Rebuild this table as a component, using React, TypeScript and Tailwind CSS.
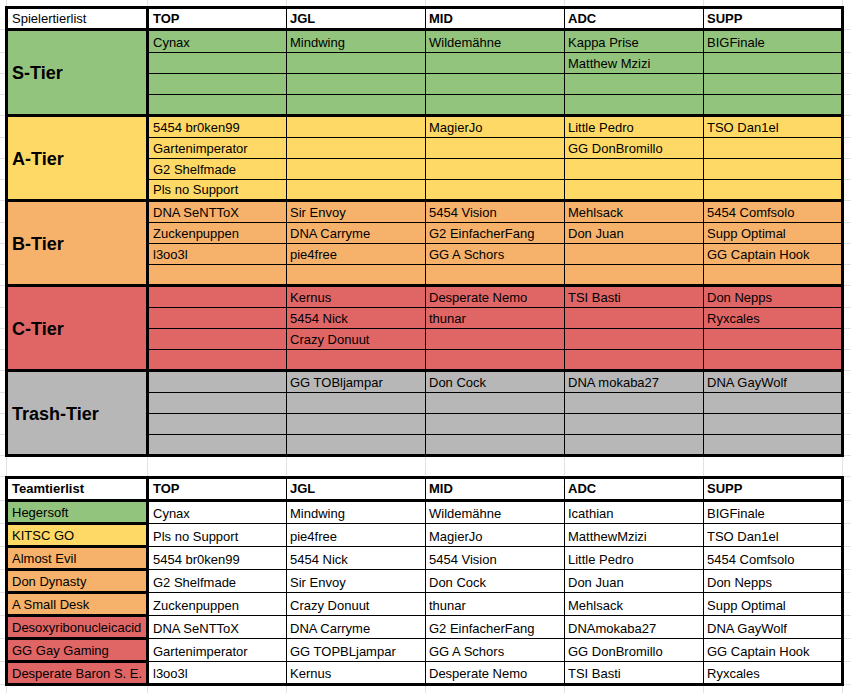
import React from "react";

const COLS = [
  "w-[138px] border-r border-black pl-[4px]",
  "w-[139px] border-r border-black pl-[3px]",
  "w-[139px] border-r border-black pl-[3px]",
  "w-[139px] border-r border-black pl-[3px]",
  "w-[137px] pl-[3px]",
];

const HEAD = ["TOP", "JGL", "MID", "ADC", "SUPP"];

type Tier = {
  name: string;
  bg: string;
  heights: string[];
  last?: boolean;
  rows: string[][];
};

const tiers: Tier[] = [
  {
    name: "S-Tier",
    bg: "bg-[#93c47d]",
    heights: ["h-[22px]", "h-[21px]", "h-[21px]", "h-[19px]"],
    rows: [
      ["Cynax", "Mindwing", "Wildemähne", "Kappa Prise", "BIGFinale"],
      ["", "", "", "Matthew Mzizi", ""],
      ["", "", "", "", ""],
      ["", "", "", "", ""],
    ],
  },
  {
    name: "A-Tier",
    bg: "bg-[#ffd966]",
    heights: ["h-[21px]", "h-[21px]", "h-[21px]", "h-[19px]"],
    rows: [
      ["5454 br0ken99", "", "MagierJo", "Little Pedro", "TSO Dan1el"],
      ["Gartenimperator", "", "", "GG DonBromillo", ""],
      ["G2 Shelfmade", "", "", "", ""],
      ["Pls no Support", "", "", "", ""],
    ],
  },
  {
    name: "B-Tier",
    bg: "bg-[#f6b26b]",
    heights: ["h-[21px]", "h-[21px]", "h-[21px]", "h-[19px]"],
    rows: [
      ["DNA SeNTToX", "Sir Envoy", "5454 Vision", "Mehlsack", "5454 Comfsolo"],
      ["Zuckenpuppen", "DNA Carryme", "G2 EinfacherFang", "Don Juan", "Supp Optimal"],
      ["l3oo3l", "pie4free", "GG A Schors", "", "GG Captain Hook"],
      ["", "", "", "", ""],
    ],
  },
  {
    name: "C-Tier",
    bg: "bg-[#e06666]",
    heights: ["h-[21px]", "h-[21px]", "h-[21px]", "h-[19px]"],
    rows: [
      ["", "Kernus", "Desperate Nemo", "TSI Basti", "Don Nepps"],
      ["", "5454 Nick", "thunar", "", "Ryxcales"],
      ["", "Crazy Donuut", "", "", ""],
      ["", "", "", "", ""],
    ],
  },
  {
    name: "Trash-Tier",
    bg: "bg-[#b7b7b7]",
    heights: ["h-[21px]", "h-[21px]", "h-[21px]", "h-[19px]"],
    last: true,
    rows: [
      ["", "GG TOBljampar", "Don Cock", "DNA mokaba27", "DNA GayWolf"],
      ["", "", "", "", ""],
      ["", "", "", "", ""],
      ["", "", "", "", ""],
    ],
  },
];

const teams: { name: string; bg: string; players: string[] }[] = [
  { name: "Hegersoft", bg: "bg-[#93c47d]", players: ["Cynax", "Mindwing", "Wildemähne", "Icathian", "BIGFinale"] },
  { name: "KITSC GO", bg: "bg-[#ffd966]", players: ["Pls no Support", "pie4free", "MagierJo", "MatthewMzizi", "TSO Dan1el"] },
  { name: "Almost Evil", bg: "bg-[#f6b26b]", players: ["5454 br0ken99", "5454 Nick", "5454 Vision", "Little Pedro", "5454 Comfsolo"] },
  { name: "Don Dynasty", bg: "bg-[#f6b26b]", players: ["G2 Shelfmade", "Sir Envoy", "Don Cock", "Don Juan", "Don Nepps"] },
  { name: "A Small Desk", bg: "bg-[#f6b26b]", players: ["Zuckenpuppen", "Crazy Donuut", "thunar", "Mehlsack", "Supp Optimal"] },
  { name: "Desoxyribonucleicacid", bg: "bg-[#e06666]", players: ["DNA SeNTToX", "DNA Carryme", "G2 EinfacherFang", "DNAmokaba27", "DNA GayWolf"] },
  { name: "GG Gay Gaming", bg: "bg-[#e06666]", players: ["Gartenimperator", "GG TOPBLjampar", "GG A Schors", "GG DonBromillo", "GG Captain Hook"] },
  { name: "Desperate Baron S. E.", bg: "bg-[#e06666]", players: ["l3oo3l", "Kernus", "Desperate Nemo", "TSI Basti", "Ryxcales"] },
];

const TEAM_ROW_H = ["h-[22px]", "h-[23px]", "h-[23px]", "h-[23px]", "h-[23px]", "h-[23px]", "h-[23px]", "h-[21px]"];

const GUTTER = [
  "h-[30px]", "h-[23px]", "h-[21px]", "h-[21px]", "h-[21px]",
  "h-[22px]", "h-[21px]", "h-[21px]", "h-[21px]",
  "h-[22px]", "h-[21px]", "h-[21px]", "h-[21px]",
  "h-[22px]", "h-[21px]", "h-[21px]", "h-[21px]",
  "h-[22px]", "h-[21px]", "h-[21px]", "h-[21px]",
  "h-[21px]", "h-[24px]", "h-[23px]", "h-[23px]", "h-[23px]", "h-[23px]",
  "h-[23px]", "h-[23px]", "h-[23px]", "h-[23px]",
];

function Gutter({ className }: { className: string }) {
  return (
    <div className={`flex flex-col ${className}`}>
      {GUTTER.map((h, i) => (
        <div key={i} className={`${h} border-b border-[#e2e2e2]`} />
      ))}
    </div>
  );
}

function GhostStrip({ h }: { h: string }) {
  return (
    <div className={`flex pl-[1px] ${h}`}>
      <div className="w-[142px] border-x border-[#e2e2e2]" />
      <div className="w-[139px] border-r border-[#e2e2e2]" />
      <div className="w-[139px] border-r border-[#e2e2e2]" />
      <div className="w-[139px] border-r border-[#e2e2e2]" />
      <div className="w-[139px] border-r border-[#e2e2e2]" />
      <div className="w-[139px] border-r border-[#e2e2e2]" />
    </div>
  );
}

function HeaderRow({ label, bold, h }: { label: string; bold: boolean; h: string }) {
  return (
    <div className={`flex ${h} border-b-[3px] border-black bg-white`}>
      <div className={`w-[141px] shrink-0 border-r-[3px] border-black pl-[4px] pt-[2px] ${bold ? "font-bold" : ""}`}>
        {label}
      </div>
      {HEAD.map((t, j) => (
        <div key={t} className={`${COLS[j]} shrink-0 pt-[2px] font-bold`}>
          {t}
        </div>
      ))}
    </div>
  );
}

export default function App() {
  return (
    <div className="flex w-[851px] h-[693px] overflow-hidden bg-white text-black text-[13px] leading-[15px] font-['Liberation_Sans',Arial,sans-serif]">
      <Gutter className="w-[5px] shrink-0" />
      <div className="w-[839px] shrink-0 flex flex-col">
        <GhostStrip h="h-[6px]" />

        {/* Spielertierlist */}
        <div className="w-[839px] border-[3px] border-black flex flex-col">
          <HeaderRow label="Spielertierlist" bold={false} h="h-[22px]" />
          {tiers.map((t) => (
            <div key={t.name} className={`flex ${t.bg} ${t.last ? "" : "border-b-[3px] border-black"}`}>
              <div className="w-[141px] shrink-0 border-r-[3px] border-black flex items-center pl-[4px] pt-[2px] text-[18px] leading-[21px] font-bold">
                {t.name}
              </div>
              <div className="flex flex-col">
                {t.rows.map((r, i) => (
                  <div key={i} className={`flex ${t.heights[i]} ${i < 3 ? "border-b border-black" : ""}`}>
                    {r.map((c, j) => (
                      <div key={j} className={`${COLS[j]} shrink-0 flex items-end pb-[2px] whitespace-nowrap overflow-hidden`}>
                        {c}
                      </div>
                    ))}
                  </div>
                ))}
              </div>
            </div>
          ))}
        </div>

        <GhostStrip h="h-[19px]" />

        {/* Teamtierlist */}
        <div className="w-[839px] border-[3px] border-black flex flex-col">
          <HeaderRow label="Teamtierlist" bold={true} h="h-[23px]" />
          <div className="flex">
            <div className="w-[141px] shrink-0 border-r-[3px] border-black flex flex-col">
              {teams.map((t, i) => (
                <div
                  key={t.name}
                  className={`${i < 7 ? "h-[23px] border-b-[3px] border-black" : "h-[20px]"} ${t.bg} flex items-center pl-[4px] whitespace-nowrap overflow-hidden`}
                >
                  {t.name}
                </div>
              ))}
            </div>
            <div className="flex flex-col bg-white">
              {teams.map((t, i) => (
                <div key={t.name} className={`flex ${TEAM_ROW_H[i]} ${i < 7 ? "border-b border-black" : ""}`}>
                  {t.players.map((p, j) => (
                    <div key={j} className={`${COLS[j]} shrink-0 flex items-end pb-[2px] whitespace-nowrap overflow-hidden`}>
                      {p}
                    </div>
                  ))}
                </div>
              ))}
            </div>
          </div>
        </div>

        <GhostStrip h="h-[7px]" />
      </div>
      <Gutter className="flex-1" />
    </div>
  );
}
